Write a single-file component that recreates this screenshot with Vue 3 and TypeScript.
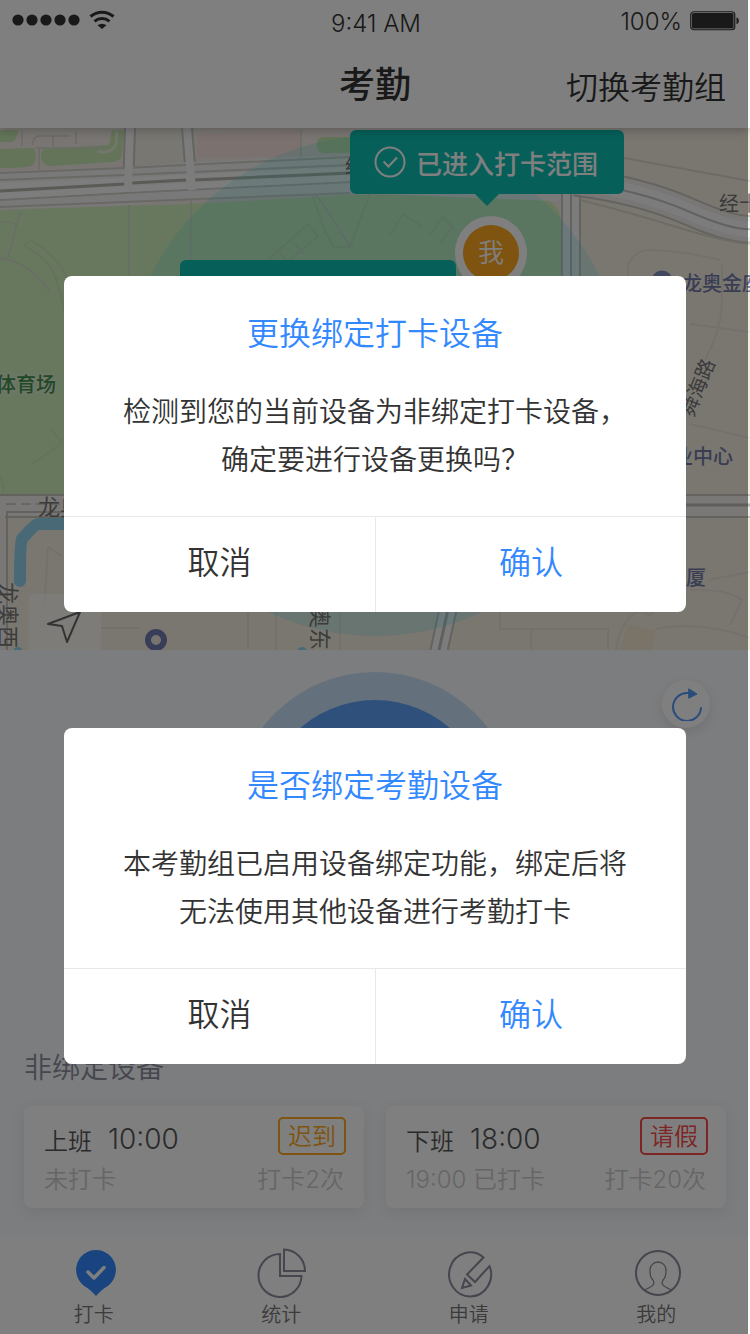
<script setup lang="ts">
interface Dialog {
  id: string
  title: string
  lines: string[]
}

interface Shift {
  label: string
  time: string
  status: string
  count: string
  tag: string
  tone: 'late' | 'leave'
}

const dialogs: Dialog[] = [
  { id: 'change', title: '更换绑定打卡设备', lines: ['检测到您的当前设备为非绑定打卡设备，', '确定要进行设备更换吗？'] },
  { id: 'bind', title: '是否绑定考勤设备', lines: ['本考勤组已启用设备绑定功能，绑定后将', '无法使用其他设备进行考勤打卡'] },
]

const shifts: Shift[] = [
  { label: '上班', time: '10:00', status: '未打卡', count: '打卡2次', tag: '迟到', tone: 'late' },
  { label: '下班', time: '18:00', status: '19:00 已打卡', count: '打卡20次', tag: '请假', tone: 'leave' },
]
</script>

<template>
  <div class="page">
    <header class="header">
      <div class="status">
        <div class="signal">
          <svg width="104" height="24" viewBox="12 8 104 24" aria-hidden="true">
            <circle v-for="n in 5" :key="n" :cx="4 + n * 14" cy="20" r="5.6" fill="#333" />
            <path d="M90.500 16.500a17.500 17.500 0 0 1 23 0M94.500 21.300a11.500 11.500 0 0 1 15 0" fill="none" stroke="#333" stroke-width="3" />
            <path d="M97.500 25.300a7 7 0 0 1 9 0L102 29z" fill="#333" />
          </svg>
        </div>
        <span class="clock">9:41 AM</span>
        <div class="power">
          <span>100%</span>
          <svg width="50" height="20" viewBox="0 0 50 20" aria-hidden="true">
            <rect x="0.750" y="0.750" width="44" height="18" rx="3" fill="none" stroke="#333" stroke-width="1.200" />
            <rect x="2" y="2" width="41.500" height="15.500" rx="1.500" fill="#333" />
            <path d="M46.500 6.500c3 0 3 6.500 0 6.500z" fill="#333" />
          </svg>
        </div>
      </div>
      <div class="nav">
        <h1>考勤</h1>
        <button type="button" class="switch">切换考勤组</button>
      </div>
    </header>

    <section class="map" aria-label="地图">
      <svg class="tiles" viewBox="0 128 750 522" preserveAspectRatio="xMidYMid slice">
        <rect x="0" y="128" width="750" height="522" fill="#f4eee2" />
        <path d="M0 128H560V205L0 212z" fill="#f1ebe6" />
        <path d="M136 128H183L190 160L134 165z" fill="#f1eee4" />
        <!-- Parks -->
        <g fill="#c6e8b0">
          <path d="M0 130H18Q17 142 11 142H0zM0 149L34 148Q38 160 33 165Q28 168 0 168z" />
          <path d="M44 149L109 145L112 130H124L122 155Q121 161 112 162L50 166Q40 164 41 155Q41 150 44 149z" />
          <rect x="317" y="137" width="60" height="16" rx="6" />
        </g>
        <path d="M197 134L301 130V156L197 158z" fill="#f7e2de" />
        <path d="M0 210L190 204L350 195L480 194L540 198Q560 202 561 222V496H0z" fill="#d0f0bc" />
        <!-- Small streets -->
        <g fill="none" stroke="#e2ded8" stroke-width="2">
          <path d="M22 131V146M32 145Q34 136 38 136H70M53 136V146M76 131V144M36 148H109M39 148V170M301 130V160M312 190L325 207L350 247M20 212L8 258M0 258Q30 262 50 292M129 200V276M191 200V270M0 222Q10 220 16 225" stroke="#d6d8cc" stroke-width="1.500" />
        </g>
        <path d="M97 151Q110 155 116 145L117 131" fill="none" stroke="#e5eed8" stroke-width="3" />
        <g fill="none" stroke="#cbd9bc" stroke-width="2" opacity=".6">
          <path d="M24 246L30 240Q56 254 67 277M24 246Q46 256 58 280M270 258L308 224L318 236L275 273M280 253L292 266M292 241L304 254M312 194L325 232L334 247H350L370 194M390 235L403 214L422 226M430 235L443 217L453 227L440 243M52 270Q67 305 68 350M52 430L62 443L32 464M0 475Q6 490 2 498" />
        </g>
        <!-- Main road -->
        <g fill="none">
          <path d="M130 128L128 190M187 128L192 190" stroke="#c9c8c2" stroke-width="12" />
          <path d="M0 190L125 186L190 181L350 174L580 183" stroke="#f4f3f2" stroke-width="38" />
          <path d="M0 173L125 168L350 157M0 180L125 175L350 165M0 200L125 193L350 182M0 207L125 202L350 193" stroke="#d2d1c9" stroke-width="2" />
          <path d="M0 186L125 181L350 170M0 196L125 189L350 178" stroke="#fafafc" stroke-width="6" />
          <path d="M0 191L125 184M132 183L186 180M193 180L350 173" stroke="#b6b5ad" stroke-width="3" />
          <path d="M130 128L128 190M187 128L192 190" stroke="#f8f8fb" stroke-width="8" />
        </g>
        <!-- East roads -->
        <g fill="none">
          <path d="M571 190V500" stroke="#c8c7c0" stroke-width="20" />
          <path d="M571 190V500" stroke="#f8f8fb" stroke-width="16" />
          <path d="M571 190V500" stroke="#c8c7c0" stroke-width="2" />
          <path d="M575 182Q640 190 690 212T760 228" stroke="#c8c7c0" stroke-width="29" />
          <path d="M575 182Q640 190 690 212T760 228" stroke="#f0eeea" stroke-width="25" />
          <path d="M575 182Q640 190 690 212T760 228" stroke="#f9f9fb" stroke-width="16" />
          <path d="M575 182Q640 190 690 212T760 228" stroke="#c4c4c0" stroke-width="2" />
          <path d="M580 200Q625 211 680 228T760 244M624 158Q690 170 750 181" stroke="#dcd7cd" stroke-width="2" />
        </g>
        <g fill="none" stroke="#e9e3d9" stroke-width="2">
          <path d="M628 290V265Q634 250 650 250Q690 252 720 260M722 265V300Q722 328 705 360M690 324L750 332M690 424L750 438M708 580L750 572M690 590Q725 588 742 600L730 625M616 650Q622 616 640 611L650 615L665 601" />
          <path d="M48 547L44 610M48 547L62 556M101 628H140M248 612V650M276 612V650M340 612V650M500 612V629H608V650M531 629V650M656 629Q700 620 750 638" />
        </g>
        <g fill="none">
          <path d="M0 506H750" stroke="#c8c5bd" stroke-width="24" />
          <path d="M0 506H750" stroke="#f2f0ec" stroke-width="20" />
          <path d="M560 505H750" stroke="#bfbdb5" stroke-width="3" />
          <path d="M6 504H60" stroke="#d1cec8" stroke-width="2" stroke-dasharray="10 5" />
          <path d="M7 650V512H64" stroke="#c9c5bc" stroke-width="2" />
          <path d="M0 513H5V650H0z" fill="#f2f0ed" />
          <path d="M450 600L438 655" stroke="#c8c7c0" stroke-width="19" />
          <path d="M450 600L438 655" stroke="#f8f8fb" stroke-width="15" />
          <path d="M450 600L438 655" stroke="#c2c1bc" stroke-width="3" />
        </g>
        <path d="M620 650L628 625L655 630L652 650z" fill="#f3e6d0" />
        <path d="M70 524H38Q34 525 22 539Q20 543 20 581" fill="none" stroke="#94d2ec" stroke-width="12" stroke-linecap="round" stroke-linejoin="round" />
        <circle cx="18" cy="652" r="5" fill="#94d2ec" />
        <circle cx="302" cy="652" r="5" fill="#94d2ec" />
        <circle cx="375" cy="386" r="250" fill="#32d5d6" fill-opacity=".17" />
        <!-- Place labels -->
        <g class="road-name">
          <text x="345" y="174">经</text>
          <text x="719" y="211">经十</text>
          <text x="38" y="515" class="large">龙奥</text>
          <text transform="translate(0 582) rotate(90)" class="large">龙奥西</text>
          <text transform="translate(312 606) rotate(90)" class="large">奥东</text>
          <text transform="translate(693 418) rotate(-68)">舜海路</text>
        </g>
        <g class="place">
          <text x="682" y="291">龙奥金座</text>
          <text x="673" y="464">业中心</text>
          <text x="686" y="585">厦</text>
        </g>
        <text x="-4" y="392" class="park-name">体育场</text>
        <circle cx="662" cy="281" r="7" fill="#f4eee2" stroke="#8490c0" stroke-width="7" />
        <circle cx="156" cy="640" r="8" fill="#eee9df" stroke="#707bb0" stroke-width="6" />
      </svg>
      <div class="tip range">
        <svg width="32" height="32" viewBox="0 0 32 32" fill="none" stroke="#fff" stroke-width="2" aria-hidden="true">
          <circle cx="16" cy="16" r="14.500" />
          <path d="M9.500 15.500l5 5 8.500-9" />
        </svg>
        <span>已进入打卡范围</span>
      </div>
      <div class="me"><span>我</span></div>
      <div class="tip place-tip"></div>
      <button type="button" class="locate" aria-label="定位">
        <svg width="36" height="34" viewBox="1 0 36 34" fill="none" stroke="#666" stroke-width="2" stroke-linejoin="round">
          <path d="M2 14L34 2L21 32L16 16z" />
        </svg>
      </button>
    </section>

    <main class="panel">
      <div class="stage">
        <button type="button" class="punch" aria-label="打卡">
          <svg width="284" height="284" viewBox="0 0 284 284">
            <circle cx="142" cy="142" r="142" fill="#c8e0f8" />
            <circle cx="142" cy="142" r="114" fill="#60a0f8" />
          </svg>
        </button>
        <button type="button" class="refresh" aria-label="刷新">
          <svg width="34" height="34" viewBox="-1 -1 34 34" fill="none" stroke="#5098f8" stroke-width="2" stroke-linecap="round">
            <path d="M18 5A14 14 0 1 0 31 20" />
            <path d="M19 1L27 6L19 10z" fill="#5098f8" stroke-width="1" />
          </svg>
        </button>
      </div>
      <h2>非绑定设备</h2>
      <div class="cards">
        <article v-for="s in shifts" :key="s.label" class="card">
          <div class="row top">
            <div class="shift"><span>{{ s.label }}</span><time>{{ s.time }}</time></div>
            <span class="tag" :class="s.tone">{{ s.tag }}</span>
          </div>
          <div class="row detail"><span>{{ s.status }}</span><span>{{ s.count }}</span></div>
        </article>
      </div>
    </main>

    <nav class="tabs">
      <a href="#punch" aria-current="page">
        <svg width="48" height="50" viewBox="-2 0 48 50" aria-hidden="true">
          <path d="M24 2a20 20 0 0 1 9 37.800Q30 41.500 24 48Q18 41.500 15 39.800A20 20 0 0 1 24 2z" fill="#3288ff" />
          <path d="M16 24l6 6L32 19.500" fill="none" stroke="#fff" stroke-width="3.500" stroke-linecap="round" stroke-linejoin="round" />
        </svg>
        <span>打卡</span>
      </a>
      <a href="#stats">
        <svg width="50" height="50" viewBox="-1 0 50 50" fill="none" stroke="#8a8c9c" stroke-width="2" aria-hidden="true">
          <path d="M23 6A21.500 21.500 0 1 0 44.500 28H23z" />
          <path d="M27 1.500V23H48A21.500 21.500 0 0 0 27 1.500z" />
        </svg>
        <span>统计</span>
      </a>
      <a href="#apply">
        <svg width="48" height="50" viewBox="0 0 48 50" fill="none" stroke="#8a8c9c" stroke-width="2" aria-hidden="true">
          <path d="M38.500 9.500A21 22 0 1 0 44.500 18L30 34L22 26.500z" />
          <path d="M20 31L26 37.500L17 40z" />
        </svg>
        <span>申请</span>
      </a>
      <a href="#mine">
        <svg width="50" height="50" viewBox="-2 0 50 50" fill="none" stroke="#8a8c9c" stroke-width="2" aria-hidden="true">
          <circle cx="25" cy="25" r="22" />
          <path d="M11.500 42Q21 38 21 35Q21 33 18.500 30Q17 28 17 22A8 8 0 0 1 33 22Q33 28 31.500 30Q29 33 29 35Q29 38 38.500 42" stroke-width="1.300" />
        </svg>
        <span>我的</span>
      </a>
    </nav>

    <div class="overlay">
      <section v-for="d in dialogs" :key="d.id" class="dialog" role="dialog" :aria-labelledby="d.id">
        <div class="body">
          <h3 :id="d.id">{{ d.title }}</h3>
          <p><template v-for="(line, i) in d.lines" :key="line"><br v-if="i">{{ line }}</template></p>
        </div>
        <div class="actions">
          <button type="button">取消</button>
          <button type="button" class="confirm">确认</button>
        </div>
      </section>
    </div>
  </div>
</template>

<style>
body {
  background: #f8fafe;
}
</style>

<style scoped>
.page {
  position: relative;
  display: flex;
  flex-direction: column;
  min-height: 100vh;
  overflow: hidden;
  color: #333;
  font-family: Inter, "Noto Sans CJK SC", sans-serif;
  font-weight: 350;
}
h1, h2, h3, p {
  margin: 0;
  font-weight: inherit;
}
button {
  margin: 0;
  padding: 0;
  border: 0;
  background: none;
  color: inherit;
  font: inherit;
}
svg {
  display: block;
  flex: none;
}
.header {
  position: relative;
  z-index: 1;
  background: #fff;
  box-shadow: 0 2px 10px rgba(0, 0, 0, 0.25);
}
.status,
.nav {
  display: grid;
  grid-template-columns: 1fr auto 1fr;
  align-items: center;
}
.status {
  height: 46px;
  padding: 0 10px 0 12px;
  font-size: 24px;
  font-weight: 300;
}
.signal {
  padding-bottom: 6px;
}
.power {
  display: flex;
  align-items: center;
  justify-content: flex-end;
  gap: 8px;
  padding-bottom: 4px;
}
.nav {
  height: 82px;
  padding: 0 24px;
}
.nav h1 {
  grid-column: 2;
  padding-bottom: 4px;
  font-size: 36px;
  line-height: 48px;
  font-weight: 500;
}
.switch {
  justify-self: end;
  padding-bottom: 4px;
  font-size: 32px;
}
.map {
  position: relative;
  overflow: hidden;
}
.tiles {
  width: 100%;
  height: auto;
}
.road-name {
  fill: #777;
  font-size: 20px;
  font-weight: 400;
}
.large {
  font-size: 22px;
}
.place {
  fill: #727ba8;
  font-size: 20px;
  font-weight: 500;
}
.park-name {
  fill: #43934b;
  font-size: 20px;
  font-weight: 500;
  stroke: #dfeed6;
  stroke-width: 3px;
  paint-order: stroke;
}
.tip {
  position: absolute;
  border-radius: 6px;
  background: #0cc0b2;
  color: #fff;
}
.range {
  top: 2px;
  left: calc(50% - 25px);
  display: flex;
  align-items: center;
  gap: 10px;
  height: 64px;
  padding: 0 26px 0 24px;
  font-size: 26px;
  font-weight: 500;
}
.range::after {
  content: "";
  position: absolute;
  top: 100%;
  left: 50%;
  margin-left: -12px;
  border: 12px solid transparent;
  border-top-color: #0cc0b2;
  border-bottom: 0;
}
.me {
  position: absolute;
  top: 88px;
  left: calc(50% + 80px);
  display: grid;
  place-items: center;
  width: 72px;
  height: 74px;
  border-radius: 50%;
  background: #fff;
}
.me span {
  width: 56px;
  border-radius: 50%;
  background: #fca820;
  color: #fff;
  font-size: 26px;
  line-height: 56px;
  text-align: center;
}
.place-tip {
  top: 132px;
  left: calc(50% - 195px);
  width: 276px;
  height: 60px;
}
.locate {
  position: absolute;
  left: 29px;
  bottom: -16px;
  display: grid;
  place-items: center;
  width: 72px;
  height: 72px;
  padding-bottom: 6px;
  border-radius: 6px;
  background: rgba(255, 255, 255, 0.6);
}
.panel {
  flex: 1;
  display: flex;
  flex-direction: column;
  padding: 22px 24px 28px;
  background: #f8fafe;
}
.stage {
  flex: 1;
  position: relative;
  display: flex;
  justify-content: center;
  align-items: flex-start;
}
.refresh {
  position: absolute;
  top: 8px;
  right: 16px;
  display: grid;
  place-items: center;
  width: 48px;
  height: 48px;
  border-radius: 50%;
  background: #fff;
  box-shadow: 0 4px 12px rgba(0, 0, 0, 0.1);
}
.panel h2 {
  margin: 0 0 18px;
  color: #8c8e9e;
  font-size: 28px;
  line-height: 40px;
}
.cards {
  display: grid;
  grid-template-columns: 1fr 1fr;
  gap: 22px;
}
.card {
  padding: 11px 18px 9px 20px;
  border-radius: 8px;
  background: #fff;
  box-shadow: 0 4px 16px rgba(0, 0, 0, 0.08);
  font-size: 24px;
}
.row {
  display: flex;
  justify-content: space-between;
}
.top {
  height: 44px;
}
.shift {
  display: flex;
  align-items: center;
  gap: 16px;
  color: #555;
}
.shift time {
  font-size: 28px;
  font-weight: 300;
}
.tag {
  align-self: flex-start;
  padding: 2px 8px 0;
  border: 2px solid;
  border-radius: 5px;
  line-height: 32px;
}
.late {
  color: #fca820;
}
.leave {
  color: #fa4848;
}
.detail {
  color: #ccc;
  line-height: 38px;
  padding-right: 2px;
}
.tabs {
  display: grid;
  grid-template-columns: repeat(4, 1fr);
  padding: 12px 0 6px;
  background: #fff;
}
.tabs a {
  display: flex;
  flex-direction: column;
  align-items: center;
  gap: 4px;
  color: #777;
  font-size: 20px;
  line-height: 26px;
  text-decoration: none;
}
.overlay {
  position: absolute;
  inset: 0 2px 0 0;
  z-index: 2;
  display: flex;
  flex-direction: column;
  gap: 116px;
  padding: 276px 62px 0 64px;
  background: rgba(0, 0, 0, 0.5);
}
.dialog {
  border-radius: 8px;
  background: #fff;
  text-align: center;
}
.body {
  padding: 34px 24px 32px;
}
.dialog h3 {
  color: #3288ff;
  font-size: 32px;
  line-height: 48px;
}
.dialog p {
  padding-top: 30px;
  font-size: 28px;
  line-height: 48px;
}
.actions {
  display: grid;
  grid-template-columns: 1fr 1fr;
  border-top: 1px solid #e6e8ec;
}
.actions button {
  height: 95px;
  padding-bottom: 10px;
  font-size: 32px;
}
.actions .confirm {
  border-left: 1px solid #e6e8ec;
  color: #3288ff;
}
</style>
